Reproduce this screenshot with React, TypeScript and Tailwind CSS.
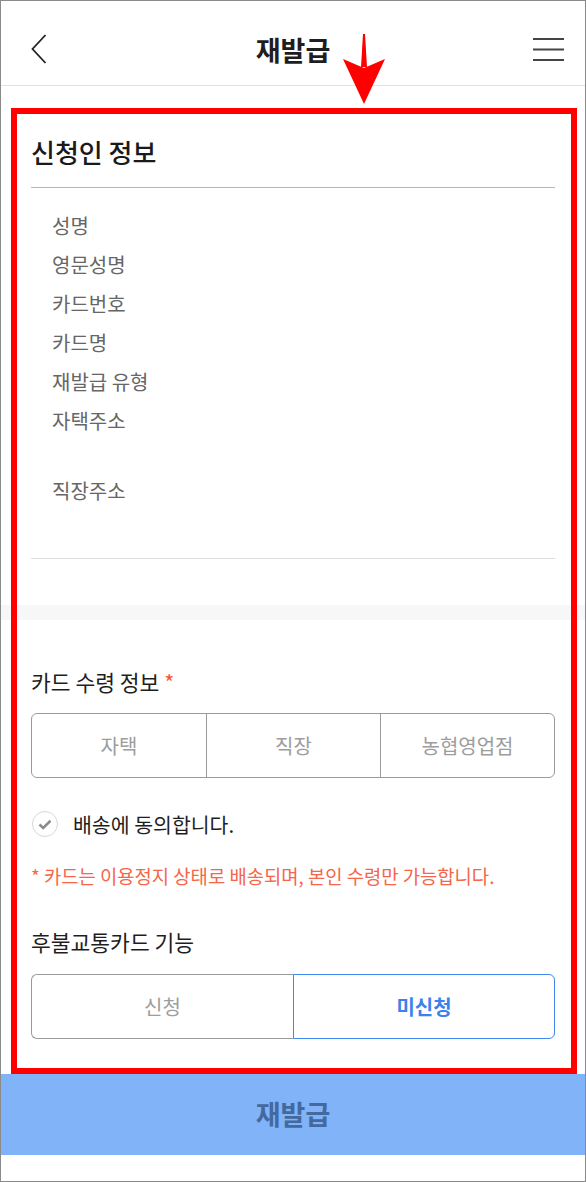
import React from "react";

const FONT = { fontFamily: '"Noto Sans CJK KR", "Noto Sans", sans-serif' };

function Seg3() {
  const items = ["자택", "직장", "농협영업점"];
  return (
    <div className="grid grid-cols-3 h-[65px] border border-[#9a9a9a] rounded-[6px] overflow-hidden">
      {items.map((t, i) => (
        <div
          key={t}
          className={
            "flex items-center justify-center text-[20px] text-[#9d9d9d] " +
            (i > 0 ? "border-l border-[#9a9a9a]" : "")
          }
        >
          {t}
        </div>
      ))}
    </div>
  );
}

export default function App() {
  const labels: { t: string; h: string }[] = [
    { t: "성명", h: "h-[39px]" },
    { t: "영문성명", h: "h-[39px]" },
    { t: "카드번호", h: "h-[39px]" },
    { t: "카드명", h: "h-[39px]" },
    { t: "재발급 유형", h: "h-[39px]" },
    { t: "자택주소", h: "h-[70px]" },
    { t: "직장주소", h: "h-[70px]" },
  ];
  return (
    <div
      style={FONT}
      className="relative w-[586px] h-[1182px] border border-[#8a8a8a] bg-white overflow-hidden"
    >
      {/* header */}
      <div className="h-[85px] border-b border-[#e2e2e2] pt-[12px] px-[30px] grid grid-cols-[1fr_auto_1fr] items-center">
        <div className="flex items-center">
          <svg width="16" height="30" viewBox="0 0 16 30">
            <path d="M14.5 1 L1.5 15 L14.5 29" fill="none" stroke="#222" strokeWidth="1.8" />
          </svg>
        </div>
        <div className="text-[27px] font-bold text-[#1e1e1e] leading-none">재발급</div>
        <div className="flex justify-end">
          <svg width="31" height="23" viewBox="0 0 31 23" className="mr-[-9px]">
            <path d="M0 1 H31 M0 11.5 H31 M0 22 H31" stroke="#444" strokeWidth="1.8" />
          </svg>
        </div>
      </div>

      {/* section 1 */}
      <div className="px-[30px] pt-[48px]">
        <div className="text-[26px] leading-[36px] font-medium text-[#1a1a1a]">신청인 정보</div>
        <div className="mt-[17px] h-px bg-[#b5b5b5]" />
        <div className="pt-[18px] pl-[21px]">
          {labels.map((l) => (
            <div key={l.t} className={l.h + " text-[20px] leading-[39px] text-[#666]"}>
              {l.t}
            </div>
          ))}
        </div>
        <div className="mt-[17px] h-px bg-[#dedede]" />
      </div>
      <div className="mt-[46px] h-[15px] bg-[#f7f7f7]" />

      {/* section 2 */}
      <div className="px-[30px] pt-[47px]">
        <div className="text-[21.5px] leading-[30px] text-[#1e1e1e]">
          카드 수령 정보 <span className="text-[#f2573a]">*</span>
        </div>
        <div className="mt-[16px]">
          <Seg3 />
        </div>
        <div className="mt-[31px] h-[30px] flex items-center">
          <div className="ml-[1px] w-[26px] h-[26px] rounded-full border-[1.5px] border-[#d8d8d8] flex items-center justify-center">
            <svg width="14" height="11" viewBox="0 0 14 11">
              <path d="M1.5 5.5 L5.2 9 L12.5 1.8" fill="none" stroke="#8c8c8c" strokeWidth="2.6" />
            </svg>
          </div>
          <span className="ml-[15px] text-[20.5px] text-[#1e1e1e]">배송에 동의합니다.</span>
        </div>
        <div className="mt-[24px] text-[18.8px] leading-[26px] text-[#f5664a] whitespace-nowrap">
          * 카드는 이용정지 상태로 배송되며, 본인 수령만 가능합니다.
        </div>
        <div className="mt-[38px] text-[21.5px] leading-[30px] text-[#1e1e1e]">후불교통카드 기능</div>
        <div className="mt-[17px] grid grid-cols-2 h-[65px]">
          <div className="flex items-center justify-center border border-r-0 border-[#9a9a9a] rounded-l-[6px] text-[20px] text-[#9d9d9d]">
            신청
          </div>
          <div className="flex items-center justify-center border border-[#3f87ef] rounded-r-[6px] text-[20px] font-bold text-[#3a82ee]">
            미신청
          </div>
        </div>
      </div>

      {/* bottom button */}
      <div className="mt-[35px] h-[81px] bg-[#80b3f8] flex items-center justify-center text-[27px] font-bold text-[#43699f]">
        재발급
      </div>

      {/* red annotation box */}
      <div className="absolute left-[10px] top-[107px] w-[566px] h-[966px] border-[6px] border-[#ff0000] pointer-events-none" />
      {/* red arrow */}
      <svg className="absolute left-[338px] top-[30px] pointer-events-none" width="50" height="76" viewBox="338 30 50 76">
        <polygon points="362,33 364,33 366,66 360,66" fill="#ff0000" />
        <polygon points="342,58 363,67 384,58 363,103" fill="#ff0000" />
      </svg>
    </div>
  );
}
